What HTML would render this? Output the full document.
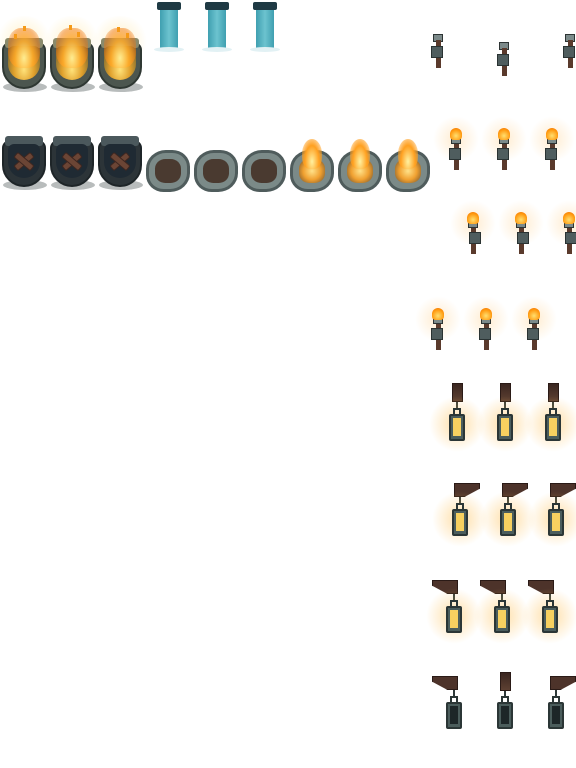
<!DOCTYPE html>
<html><head><meta charset="utf-8"><style>
html,body{margin:0;padding:0;background:#fff;}
body{width:576px;height:768px;position:relative;overflow:hidden;}
div{position:absolute;box-sizing:border-box;}
.bz{width:46px;height:70px;}
.bz .sh{left:2px;top:58px;width:44px;height:10px;border-radius:50%;background:#b8bcbc;}
.bz .bw{left:1px;top:18px;width:44px;height:47px;background:#4c564f;border-radius:8px 8px 22px 22px;border:2px solid #2f3833;}
.bz .rim{left:4px;top:14px;width:38px;height:10px;background:#8a8a6c;border-radius:3px;}
.bz .in{left:7px;top:22px;width:32px;height:34px;border-radius:6px 6px 16px 16px;background:#6b6640;}
.bz.lit .in{background:radial-gradient(ellipse at 50% 70%,#ffe27a 0,#e0a02c 45%,#6c6234 90%);}
.bz .gl{left:-6px;top:-8px;width:58px;height:50px;border-radius:50%;background:radial-gradient(circle,rgba(255,220,120,.4),rgba(255,240,200,0) 70%);}
.bz .fi{left:7px;top:4px;width:32px;height:40px;border-radius:40% 40% 40% 40%;background:radial-gradient(ellipse at 50% 75%,rgba(255,240,150,.95) 0,rgba(255,170,40,.85) 40%,rgba(240,120,16,.5) 70%,rgba(240,120,16,0) 100%);}
.bz .sp1{width:3px;height:5px;background:#f59a18;}
.bz.dk .bw{background:#2c3438;border-color:#1e2528;}
.bz.dk .rim{background:#4b585c;}
.bz.dk .in{background:#1f2a33;}
.lg{width:22px;height:7px;background:#6b4535;border:1px solid #3d2620;border-radius:2px;}
.st{width:44px;height:42px;border-radius:45% 40% 45% 40%;background:#7b8a88;border:3px solid #4f5c5c;}
.st .c{left:6px;top:6px;width:26px;height:24px;border-radius:40%;background:#4a3a30;}
.st.lit .c{background:radial-gradient(circle,#ffe28a 0,#f0a030 50%,#6a5030 100%);}
.st .f{left:9px;top:-14px;width:20px;height:30px;border-radius:50% 50% 40% 40%;background:radial-gradient(ellipse at 50% 75%,#fff1a0 0,#ffa020 50%,rgba(240,120,16,0) 100%);}
.wf{width:24px;height:52px;}
.wf .cap{left:0;top:0;width:24px;height:8px;background:#1f3a44;border-radius:2px;}
.wf .w{left:3px;top:6px;width:18px;height:40px;background:linear-gradient(90deg,#3f9fb0,#6cc3cf 50%,#3f9fb0);}
.wf .sp{left:-3px;top:45px;width:30px;height:5px;border-radius:50%;background:#e2f1f4;}
.tc{width:14px;height:40px;}
.tc .g{left:-16px;top:-16px;width:46px;height:46px;border-radius:50%;background:radial-gradient(circle,rgba(255,200,120,.35),rgba(255,230,200,0) 70%);}
.tc .h{left:2px;top:4px;width:10px;height:8px;background:#7c8a8a;border:1px solid #2d3434;}
.tc .p{left:5px;top:10px;width:5px;height:28px;background:#5a3a2c;}
.tc .b{left:0;top:16px;width:12px;height:12px;background:#4f5d5e;border:1px solid #2a3333;}
.tc .fl{left:1px;top:-4px;width:12px;height:12px;border-radius:50% 50% 30% 30%;background:radial-gradient(circle at 50% 65%,#ffe070,#ff9a10 60%,#f06a00);}
.ln{width:18px;height:34px;}
.ln .gl{left:-19px;top:-12px;width:56px;height:56px;border-radius:50%;background:radial-gradient(circle,rgba(255,190,80,.5),rgba(255,225,170,0) 70%);}
.ln .bd{left:1px;top:6px;width:16px;height:27px;background:#4b5d5c;border:2px solid #2b3636;border-radius:2px;}
.ln .gw{left:5px;top:10px;width:8px;height:18px;background:#f7d060;}
.ln.off .gw{background:#1d2628;}
.ln .tp{left:5px;top:0;width:8px;height:7px;border:2px solid #2b3636;border-bottom:none;}
.ch{width:2px;background:#2f3a3a;}
.vb{width:11px;height:19px;background:linear-gradient(#3a2620,#5d4032);border:1px solid #2a1a16;}
.hb{width:26px;height:14px;background:#4d332a;border:1px solid #2a1a16;clip-path:polygon(0 0,100% 0,100% 40%,40% 100%,0 100%);}
.hbl{width:26px;height:14px;background:#4d332a;border:1px solid #2a1a16;clip-path:polygon(0 0,100% 0,100% 100%,60% 100%,0 40%);}
</style></head><body>

<div class="bz lit" style="left:1px;top:24px"><div class="sh"></div><div class="gl"></div><div class="bw"></div><div class="rim"></div><div class="in"></div><div class="fi"></div><div class="sp1" style="left:22px;top:2px"></div><div class="sp1" style="left:13px;top:10px"></div></div>
<div class="bz lit" style="left:49px;top:24px"><div class="sh"></div><div class="gl"></div><div class="bw"></div><div class="rim"></div><div class="in"></div><div class="fi"></div><div class="sp1" style="left:20px;top:1px"></div><div class="sp1" style="left:28px;top:8px"></div></div>
<div class="bz lit" style="left:97px;top:24px"><div class="sh"></div><div class="gl"></div><div class="bw"></div><div class="rim"></div><div class="in"></div><div class="fi"></div><div class="sp1" style="left:20px;top:3px"></div><div class="sp1" style="left:29px;top:9px"></div></div>

<div class="wf" style="left:157px;top:2px"><div class="w"></div><div class="cap"></div><div class="sp"></div></div>
<div class="wf" style="left:205px;top:2px"><div class="w"></div><div class="cap"></div><div class="sp"></div></div>
<div class="wf" style="left:253px;top:2px"><div class="w"></div><div class="cap"></div><div class="sp"></div></div>

<div class="bz dk" style="left:1px;top:122px"><div class="sh"></div><div class="bw"></div><div class="rim"></div><div class="in"></div><div class="lg" style="left:12px;top:36px;transform:rotate(-40deg)"></div><div class="lg" style="left:12px;top:36px;transform:rotate(40deg)"></div></div>
<div class="bz dk" style="left:49px;top:122px"><div class="sh"></div><div class="bw"></div><div class="rim"></div><div class="in"></div><div class="lg" style="left:12px;top:36px;transform:rotate(-40deg)"></div><div class="lg" style="left:12px;top:36px;transform:rotate(40deg)"></div></div>
<div class="bz dk" style="left:97px;top:122px"><div class="sh"></div><div class="bw"></div><div class="rim"></div><div class="in"></div><div class="lg" style="left:12px;top:36px;transform:rotate(-40deg)"></div><div class="lg" style="left:12px;top:36px;transform:rotate(40deg)"></div></div>

<div class="st" style="left:146px;top:150px"><div class="c"></div></div>
<div class="st" style="left:194px;top:150px"><div class="c"></div></div>
<div class="st" style="left:242px;top:150px"><div class="c"></div></div>
<div class="st lit" style="left:290px;top:150px"><div class="c"></div><div class="f"></div></div>
<div class="st lit" style="left:338px;top:150px"><div class="c"></div><div class="f"></div></div>
<div class="st lit" style="left:386px;top:150px"><div class="c"></div><div class="f"></div></div>

<div class="tc" style="left:431px;top:30px"><div class="h"></div><div class="p"></div><div class="b"></div></div>
<div class="tc" style="left:497px;top:38px"><div class="h"></div><div class="p"></div><div class="b"></div></div>
<div class="tc" style="left:563px;top:30px"><div class="h"></div><div class="p"></div><div class="b"></div></div>

<div class="tc" style="left:449px;top:132px"><div class="g"></div><div class="p"></div><div class="b"></div><div class="h"></div><div class="fl"></div></div>
<div class="tc" style="left:497px;top:132px"><div class="g"></div><div class="p"></div><div class="b"></div><div class="h"></div><div class="fl"></div></div>
<div class="tc" style="left:545px;top:132px"><div class="g"></div><div class="p"></div><div class="b"></div><div class="h"></div><div class="fl"></div></div>

<div class="tc" style="left:466px;top:216px"><div class="g"></div><div class="p"></div><div class="b" style="left:3px"></div><div class="h"></div><div class="fl"></div></div>
<div class="tc" style="left:514px;top:216px"><div class="g"></div><div class="p"></div><div class="b" style="left:3px"></div><div class="h"></div><div class="fl"></div></div>
<div class="tc" style="left:562px;top:216px"><div class="g"></div><div class="p"></div><div class="b" style="left:3px"></div><div class="h"></div><div class="fl"></div></div>

<div class="tc" style="left:431px;top:312px"><div class="g"></div><div class="p"></div><div class="b"></div><div class="h"></div><div class="fl"></div></div>
<div class="tc" style="left:479px;top:312px"><div class="g"></div><div class="p"></div><div class="b"></div><div class="h"></div><div class="fl"></div></div>
<div class="tc" style="left:527px;top:312px"><div class="g"></div><div class="p"></div><div class="b"></div><div class="h"></div><div class="fl"></div></div>

<div class="vb" style="left:452px;top:383px"></div><div class="ch" style="left:456px;top:402px;height:8px"></div>
<div class="ln" style="left:448px;top:408px"><div class="gl"></div><div class="tp"></div><div class="bd"></div><div class="gw"></div></div>
<div class="vb" style="left:500px;top:383px"></div><div class="ch" style="left:504px;top:402px;height:8px"></div>
<div class="ln" style="left:496px;top:408px"><div class="gl"></div><div class="tp"></div><div class="bd"></div><div class="gw"></div></div>
<div class="vb" style="left:548px;top:383px"></div><div class="ch" style="left:552px;top:402px;height:8px"></div>
<div class="ln" style="left:544px;top:408px"><div class="gl"></div><div class="tp"></div><div class="bd"></div><div class="gw"></div></div>

<div class="hb" style="left:454px;top:483px"></div><div class="ch" style="left:459px;top:497px;height:8px"></div>
<div class="ln" style="left:451px;top:503px"><div class="gl"></div><div class="tp"></div><div class="bd"></div><div class="gw"></div></div>
<div class="hb" style="left:502px;top:483px"></div><div class="ch" style="left:507px;top:497px;height:8px"></div>
<div class="ln" style="left:499px;top:503px"><div class="gl"></div><div class="tp"></div><div class="bd"></div><div class="gw"></div></div>
<div class="hb" style="left:550px;top:483px"></div><div class="ch" style="left:555px;top:497px;height:8px"></div>
<div class="ln" style="left:547px;top:503px"><div class="gl"></div><div class="tp"></div><div class="bd"></div><div class="gw"></div></div>

<div class="hbl" style="left:432px;top:580px"></div><div class="ch" style="left:453px;top:594px;height:8px"></div>
<div class="ln" style="left:445px;top:600px"><div class="gl"></div><div class="tp"></div><div class="bd"></div><div class="gw"></div></div>
<div class="hbl" style="left:480px;top:580px"></div><div class="ch" style="left:501px;top:594px;height:8px"></div>
<div class="ln" style="left:493px;top:600px"><div class="gl"></div><div class="tp"></div><div class="bd"></div><div class="gw"></div></div>
<div class="hbl" style="left:528px;top:580px"></div><div class="ch" style="left:549px;top:594px;height:8px"></div>
<div class="ln" style="left:541px;top:600px"><div class="gl"></div><div class="tp"></div><div class="bd"></div><div class="gw"></div></div>

<div class="hbl" style="left:432px;top:676px"></div><div class="ch" style="left:453px;top:690px;height:8px"></div>
<div class="ln off" style="left:445px;top:696px"><div class="tp"></div><div class="bd"></div><div class="gw"></div></div>
<div class="vb" style="left:500px;top:672px"></div><div class="ch" style="left:504px;top:691px;height:7px"></div>
<div class="ln off" style="left:496px;top:696px"><div class="tp"></div><div class="bd"></div><div class="gw"></div></div>
<div class="hb" style="left:550px;top:676px"></div><div class="ch" style="left:555px;top:690px;height:8px"></div>
<div class="ln off" style="left:547px;top:696px"><div class="tp"></div><div class="bd"></div><div class="gw"></div></div>

</body></html>
